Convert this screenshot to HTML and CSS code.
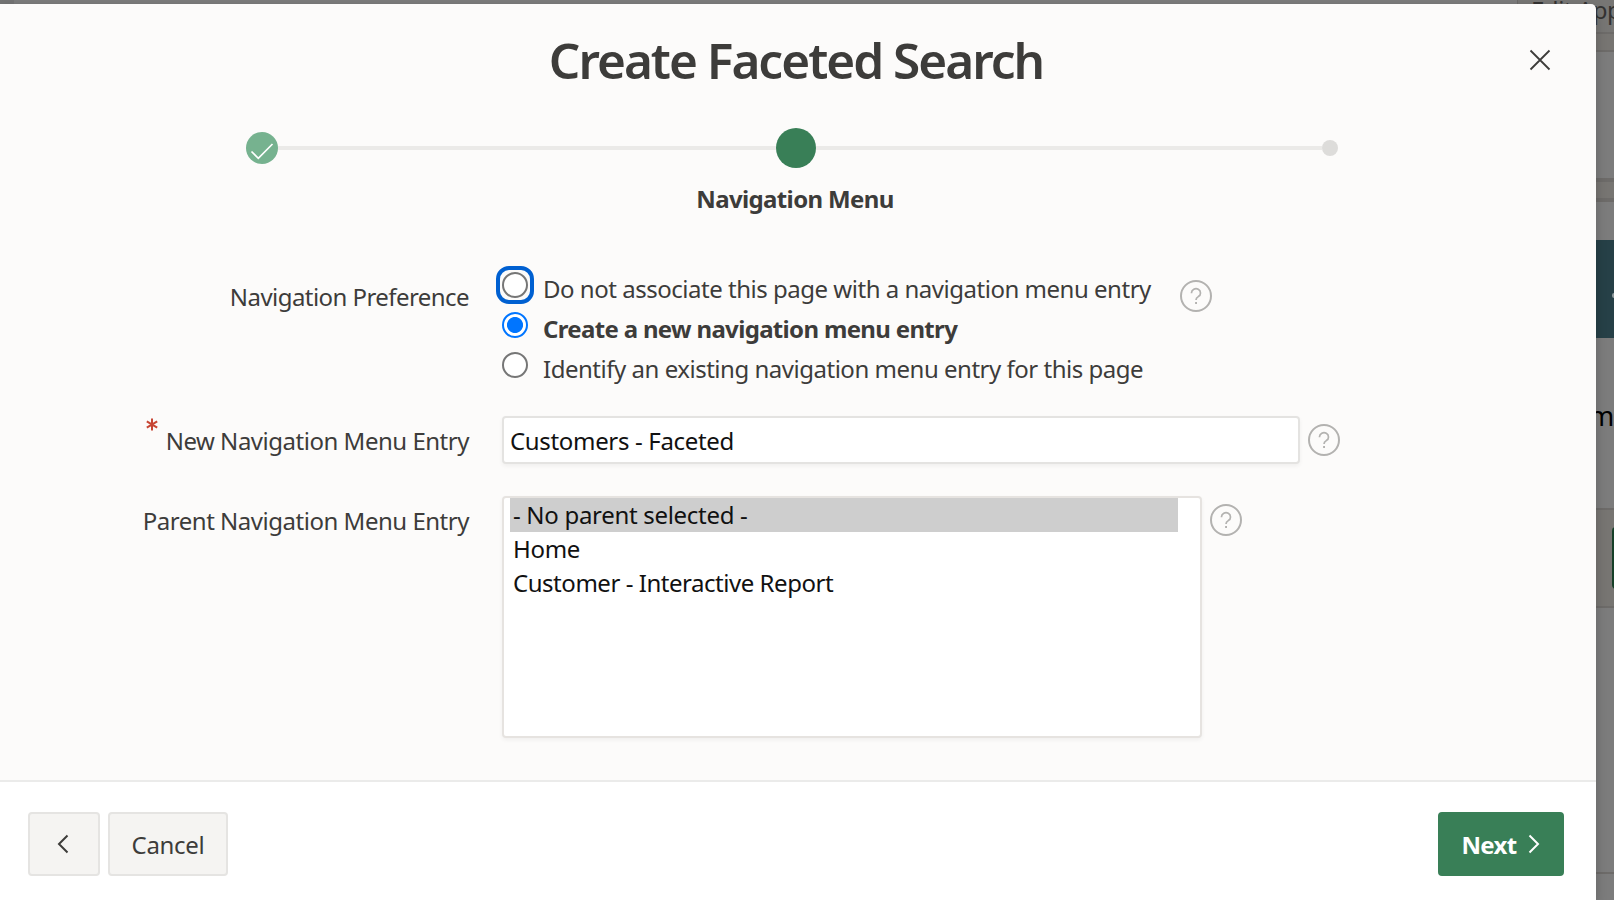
FILE: index.html
```
<!DOCTYPE html>
<html lang="en">
<head>
<meta charset="utf-8">
<title>Create Faceted Search</title>
<link rel="stylesheet" href="styles.css">
</head>
<body>
<svg class="sprite" aria-hidden="true">
  <symbol id="help" viewBox="0 0 32 32">
    <circle cx="16" cy="16" r="15" fill="none" stroke="currentColor" stroke-width="2"/>
    <path d="M11.500 13.200v-.4a4.500 4.300 0 1 1 6.800 3.800c-1.600 1-2.300 1.700-2.300 3.400" fill="none" stroke="currentColor" stroke-width="1.700"/>
    <path d="M15.100 22h1.900v2h-1.900z" fill="currentColor"/>
  </symbol>
</svg>
<div class="backdrop">
  <div class="bg-toolbar"><span class="bg-edit">Edit App</span></div>
  <div class="bg-band bg-band-a"></div>
  <div class="bg-space-a"></div>
  <div class="bg-band bg-band-b"></div>
  <div class="bg-space-b"></div>
  <div class="bg-hero"><span class="bg-arrow"></span></div>
  <div class="bg-body"><span class="bg-m">m</span></div>
  <div class="bg-band bg-band-c"><span class="bg-action"></span></div>
  <div class="bg-space-c"></div>
  <div class="bg-foot"></div>
</div>
<div class="dialog" role="dialog">
  <header class="header">
    <h1 class="title">Create Faceted Search</h1>
    <button class="close" aria-label="Close"><svg width="22" height="22" viewBox="0 0 22 22"><path d="M1.500 1.500l19 19M20.500 1.500l-19 19" fill="none" stroke="currentColor" stroke-width="1.800"/></svg></button>
  </header>
  <section class="wizard">
    <div class="steps">
      <span class="step done"><svg width="32" height="32" viewBox="0 0 32 32"><path d="M5.500 19.500l6.800 6.800L26.500 12" fill="none" stroke="#fff" stroke-width="1.700"/></svg></span>
      <span class="line line-done"></span>
      <span class="step current"></span>
      <span class="line"></span>
      <span class="step pending"></span>
    </div>
    <div class="step-label">Navigation Menu</div>
  </section>
  <main class="form">
    <div class="row row-pref">
      <div class="label"><span class="t-pref">Navigation Preference</span></div>
      <div class="radios">
        <label class="choice"><span class="radio focused"></span><span>Do not associate this page with a navigation menu entry</span></label>
        <label class="choice"><span class="radio checked"></span><span class="chosen">Create a new navigation menu entry</span></label>
        <label class="choice"><span class="radio"></span><span>Identify an existing navigation menu entry for this page</span></label>
      </div>
      <svg class="help help-pref"><use href="#help"/></svg>
    </div>
    <div class="row row-new">
      <div class="label"><svg class="required" viewBox="0 0 12 13"><path d="M6 .5v12M.8 3.300l10.400 6.400M11.200 3.300L.8 9.700" fill="none" stroke="currentColor" stroke-width="2"/></svg><span>New Navigation Menu Entry</span></div>
      <div class="input"><span>Customers - Faceted</span></div>
      <svg class="help"><use href="#help"/></svg>
    </div>
    <div class="row row-parent">
      <div class="label"><span>Parent Navigation Menu Entry</span></div>
      <div class="listbox">
        <div class="option selected">- No parent selected -</div>
        <div class="option">Home</div>
        <div class="option report">Customer - Interactive Report</div>
      </div>
      <svg class="help"><use href="#help"/></svg>
    </div>
  </main>
  <footer class="footer">
    <button class="btn back" aria-label="Previous"><svg width="12" height="20" viewBox="0 0 12 20"><path d="M10.500 1.500L2 10l8.500 8.500" fill="none" stroke="currentColor" stroke-width="2"/></svg></button>
    <button class="btn cancel"><span>Cancel</span></button>
    <button class="btn next"><span>Next</span><svg width="12" height="20" viewBox="0 0 12 20"><path d="M1.500 1.500L10 10l-8.500 8.500" fill="none" stroke="currentColor" stroke-width="2"/></svg></button>
  </footer>
</div>
</body>
</html>
```
FILE: styles.css
```
* { box-sizing: border-box; }
body {
  margin: 0;
  width: 1614px;
  height: 900px;
  overflow: hidden;
  position: relative;
  font-family: "Noto Sans", "Open Sans", sans-serif;
  font-size: 24px;
  line-height: 34px;
  letter-spacing: -0.48px;
  color: #3d3c3a;
}
.sprite { position: absolute; width: 0; height: 0; }
svg { display: block; flex: none; }
button { font: inherit; color: inherit; letter-spacing: -0.3px; }
span { white-space: nowrap; }

.backdrop { display: flex; flex-direction: column; height: 900px; background: #7c7c7c; }
.backdrop > div { flex: none; }
.bg-toolbar { height: 32px; margin-left: 1517px; padding-left: 13px; background: #777674; box-shadow: -1600px 0 #747474; border-left: 1px solid #6b6a68; color: #343332; }
.bg-edit { display: block; margin-top: -7px; }
.bg-band { background: #777572; border-top: 2px solid #6d6b69; border-bottom: 2px solid #6d6b69; }
.bg-band-a { height: 20px; }
.bg-space-a { height: 126px; }
.bg-band-b { height: 24px; border-width: 4px; }
.bg-space-b { height: 38px; }
.bg-hero { height: 98px; padding: 53px 0 0 1612px; background: #264047; }
.bg-arrow { display: block; width: 6px; height: 5px; border-radius: 2px; background: #8d9799; }
.bg-body { height: 170px; padding: 61px 0 0 1589px; font-size: 27px; color: #000; }
.bg-band-c { height: 100px; padding: 17px 0 0 1612px; }
.bg-action { display: block; width: 20px; height: 62px; border-radius: 4px; background: #164028; }
.bg-space-c { height: 264px; }
.bg-foot { height: 28px; border-top: 2px solid #6d6b69; }

.dialog {
  position: absolute;
  top: 4px;
  left: 0;
  width: 1596px;
  height: 896px;
  display: flex;
  flex-direction: column;
  background: #fcfbfa;
  border-top-right-radius: 5px;
  box-shadow: 0 4px 12px rgba(0, 0, 0, 0.2);
}
.header {
  height: 112px;
  display: grid;
  grid-template-columns: 1fr auto 1fr;
  align-items: center;
  padding: 0 45px;
}
.title { grid-column: 2; margin: 0 4px 0 0; font-size: 49.500px; line-height: 68px; font-weight: 600; letter-spacing: -2px; white-space: nowrap; }
.close { justify-self: end; padding: 0; border: 0; background: none; }

.wizard { height: 124px; padding: 12px 258px 0 246px; }
.steps { display: flex; align-items: center; height: 40px; }
.step { flex: none; border-radius: 50%; }
.done { width: 32px; height: 32px; background: #76b28f; }
.current { width: 40px; height: 40px; background: #397f57; }
.pending { width: 16px; height: 16px; background: #dddcda; }
.line { flex: 1; height: 4px; background: #ebeae8; }
.line-done { flex: 0 0 498px; }
.step-label { margin: 14px 0 0 6px; text-align: center; font-weight: 700; letter-spacing: -0.640px; }

.form { flex: 1; padding-top: 28px; }
.row { display: flex; align-items: flex-start; }
.label { width: 469px; margin-right: 33px; display: flex; justify-content: flex-end; flex: none; }
.row-pref { height: 148px; }
.row-pref .label { padding-top: 12px; }
.t-pref { letter-spacing: -0.560px; }
.radios { width: 650px; padding-top: 4px; }
.choice { display: flex; height: 40px; gap: 15px; }
.chosen { font-weight: 700; letter-spacing: -0.670px; }
.radio { flex: none; width: 26px; height: 26px; border-radius: 50%; border: 2px solid #767676; background: #fff; }
.checked { border-color: #0075ff; background: radial-gradient(circle, #0075ff 7.600px, #fff 8.400px); }
.focused { position: relative; }
.focused::after { content: ""; position: absolute; inset: -8px; border: 4px solid #0060d1; border-radius: 13px; }
.help { width: 32px; height: 32px; color: #b3b2b0; }
.help-pref { margin: 12px 0 0 28px; }
.row-new { height: 80px; }
.row-new .label { padding-top: 8px; }
.required { width: 12px; height: 13px; margin: -6px 8px 0 0; color: #c74634; }
.input { width: 798px; height: 48px; padding: 6px; background: #fff; border: 2px solid #e4e3e1; border-radius: 4px; color: #111; letter-spacing: -0.330px; box-shadow: 0 2px 4px rgba(0, 0, 0, 0.05); }
.row-new .help { margin: 8px 0 0 8px; }
.row-parent .label { padding-top: 8px; }
.listbox { width: 700px; height: 242px; padding: 0 22px 0 6px; background: #fff; border: 2px solid #e6e3e0; border-radius: 4px; color: #111; letter-spacing: -0.300px; box-shadow: 0 2px 4px rgba(0, 0, 0, 0.05); }
.option { height: 34px; padding-left: 3px; }
.report { letter-spacing: -0.460px; }
.selected { background: #cecece; }
.row-parent .help { margin: 8px 0 0 8px; }

.footer { height: 120px; display: flex; gap: 8px; padding: 30px 32px 0 28px; background: #fff; border-top: 2px solid #ebebea; }
.btn { height: 64px; display: flex; align-items: center; justify-content: center; padding: 0; border: 2px solid #e5e4e2; border-radius: 4px; background: #f5f4f2; }
.btn span { padding-top: 2px; }
.back { width: 72px; }
.back svg { margin-left: -2px; }
.cancel { width: 120px; }
.next { width: 126px; margin-left: auto; gap: 12px; background: #397f57; border-color: #397f57; color: #fff; font-weight: 700; letter-spacing: -0.700px; }
```
